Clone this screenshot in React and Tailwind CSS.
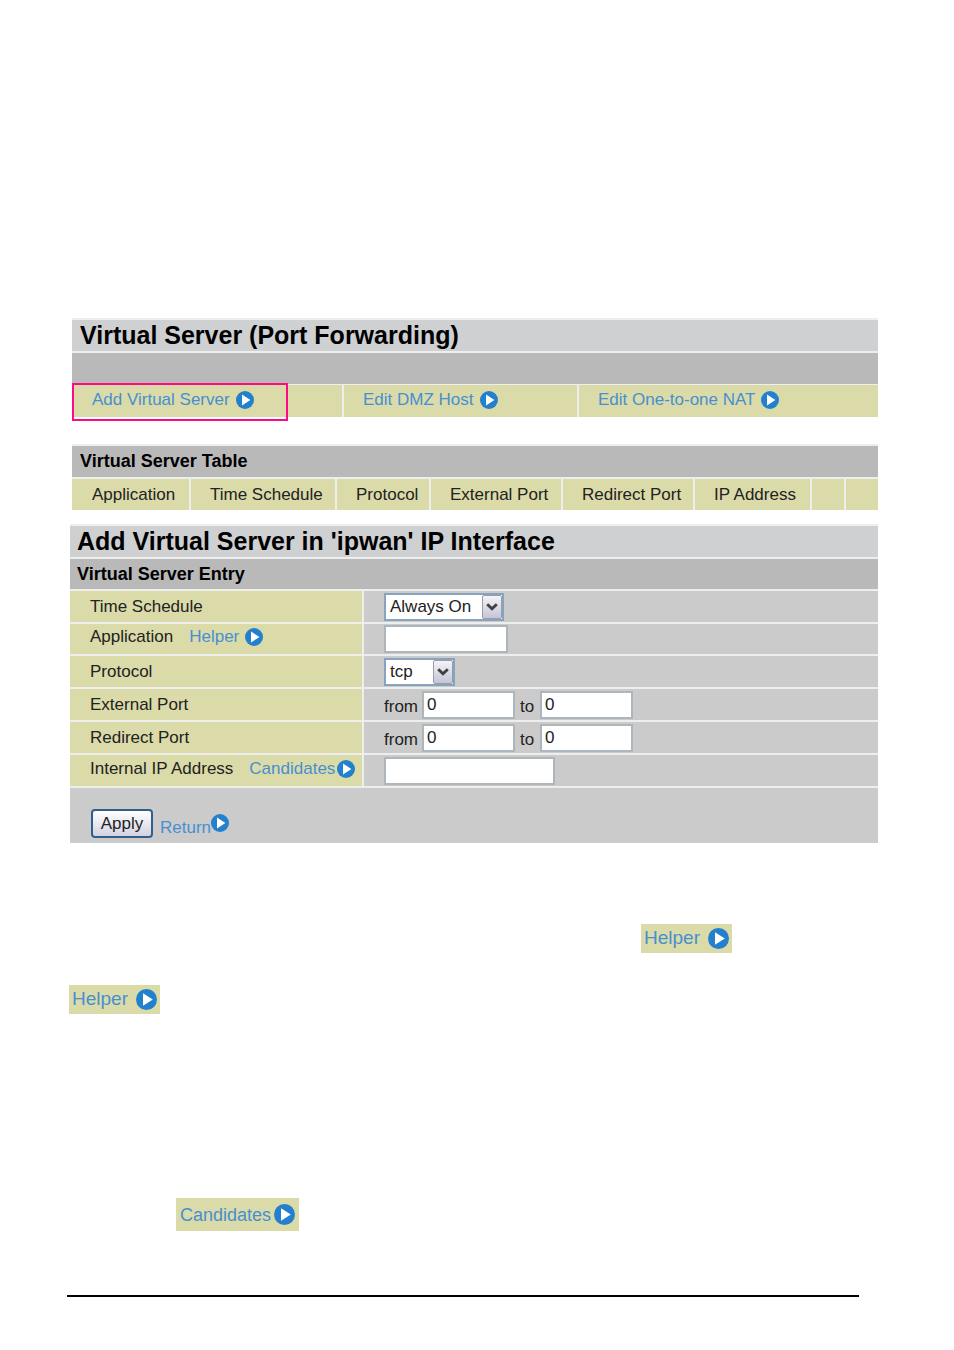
const columns = [
  { label: 'Application', width: 'w-[118px]' },
  { label: 'Time Schedule', width: 'w-[146px]' },
  { label: 'Protocol', width: 'w-[94px]' },
  { label: 'External Port', width: 'w-[132px]' },
  { label: 'Redirect Port', width: 'w-[132px]' },
  { label: 'IP Address', width: 'w-[117px]' },
  { label: '', width: 'w-[34px]' },
  { label: '', width: '' },
]

function ArrowIcon({ className = 'size-[18px]' }) {
  return (
    <svg className={`shrink-0 ${className}`} viewBox="0 0 18 18" aria-hidden="true">
      <circle cx="9" cy="9" r="9" fill="#2380cc" />
      <path d="M6 3.6v10.8L14.4 9z" fill="#fff" />
    </svg>
  )
}

function ArrowLink({ children, className = 'gap-[6px]' }) {
  return (
    <a href="#" className={`inline-flex items-center whitespace-nowrap text-[#4790d0] ${className}`}>
      {children}
      <ArrowIcon />
    </a>
  )
}

function HelpTag({ children, className }) {
  return (
    <a href="#" className={`flex w-fit items-center bg-[#dbdaa9] leading-[24px] text-[#4790d0] ${className}`}>
      {children}
      <ArrowIcon className="size-[21px]" />
    </a>
  )
}

function SelectBox({ id, options, width }) {
  return (
    <span className="relative inline-flex">
      <select
        id={id}
        className={`h-[28px] appearance-none rounded-none border-2 border-[#86a3c0] bg-white pl-1 text-[17px] leading-[22px] text-[#222] ${width}`}
      >
        {options.map((option) => (
          <option key={option}>{option}</option>
        ))}
      </select>
      <span className="pointer-events-none absolute top-[2px] right-[2px] flex h-[24px] w-[20px] items-center justify-center rounded-[2px] border border-[#9a9cab] bg-linear-to-b from-[#f4f4f8] to-[#c5c5d6]">
        <svg className="h-[8px] w-[12px]" viewBox="0 0 12 8" aria-hidden="true">
          <path d="M1.2 1.2L6 5.8l4.8-4.6" fill="none" stroke="#404040" strokeWidth="2.8" />
        </svg>
      </span>
    </span>
  )
}

function TextBox({ width, ...props }) {
  return (
    <input
      type="text"
      className={`h-[28px] rounded-none border-2 border-[#adb5bd] bg-white px-[3px] text-[17px] text-[#222] ${width}`}
      {...props}
    />
  )
}

function FormRow({ id, label, link, height = 'h-[33px]', children }) {
  return (
    <div className={`grid grid-cols-[294px_1fr] border-b-2 border-[#eeeeec] ${height}`}>
      <div className={`flex items-center gap-4 border-r-2 border-[#eeeeec] bg-[#dbdaa9] pl-[20px] whitespace-nowrap ${link ? 'pb-[4px]' : ''}`}>
        <label htmlFor={id}>{label}</label>
        {link}
      </div>
      <div className="flex items-center pl-[20px]">{children}</div>
    </div>
  )
}

function PortRange({ id, name }) {
  return (
    <>
      <label htmlFor={id} className="w-[38px] pt-[4px]">from</label>
      <TextBox id={id} width="w-[93px]" defaultValue="0" />
      <label htmlFor={`${id}-to`} className="w-[25px] pt-[4px] pl-[5px]">to</label>
      <TextBox id={`${id}-to`} width="w-[93px]" defaultValue="0" aria-label={`${name} to`} />
    </>
  )
}

export default function App() {
  return (
    <div className="bg-white pt-[318px] pb-[53px] font-['Liberation_Sans',Arial,sans-serif] text-[17px] leading-[20px] text-[#222]">
      <main>
        <section className="mr-[76px] ml-[72px]">
          <h1 className="h-[35px] border-y-2 border-[#eeeeec] bg-[#cfd0d2] pl-[8px] text-[25px] leading-[31px] font-bold text-black">
            Virtual Server (Port Forwarding)
          </h1>
          <div className="h-[32px] border-b border-[#eeeeec] bg-[#b9b9b9]" />
          <nav className="relative grid h-[32px] grid-cols-[272fr_235fr_299fr]">
            <div className="flex border-r-2 border-[#eeeeec] bg-[#dbdaa9] pb-[2px] pl-[20px]">
              <ArrowLink>Add Virtual Server</ArrowLink>
            </div>
            <div className="flex border-r-2 border-[#eeeeec] bg-[#dbdaa9] pb-[2px] pl-[19px]">
              <ArrowLink>Edit DMZ Host</ArrowLink>
            </div>
            <div className="flex bg-[#dbdaa9] pb-[2px] pl-[19px]">
              <ArrowLink>Edit One-to-one NAT</ArrowLink>
            </div>
            <span className="pointer-events-none absolute top-[-2px] left-0 h-[38px] w-[216px] border-2 border-[#ff0a86]" />
          </nav>
        </section>

        <section className="mt-[27px] mr-[76px] ml-[72px]">
          <h2 className="h-[35px] border-y-2 border-[#eeeeec] bg-[#b9b9b9] pl-[8px] text-[18px] leading-[31px] font-bold text-black">
            Virtual Server Table
          </h2>
          <table className="w-full table-fixed border-collapse">
            <thead>
              <tr className="h-[31px]">
                {columns.map((column, i) => (
                  <th
                    key={i}
                    scope="col"
                    className={`border-r-2 border-[#eeeeec] bg-[#dbdaa9] p-0 pl-[19px] text-left font-normal whitespace-nowrap first:pl-[20px] last:border-r-0 ${column.width}`}
                  >
                    {column.label}
                  </th>
                ))}
              </tr>
            </thead>
          </table>
        </section>

        <form className="mt-[14px] mr-[76px] ml-[70px] bg-[#cbcbcb]" onSubmit={(e) => e.preventDefault()}>
          <h1 className="h-[35px] border-y-2 border-[#eeeeec] bg-[#cfd0d2] pl-[7px] text-[25px] leading-[31px] font-bold text-black">
            Add Virtual Server in &apos;ipwan&apos; IP Interface
          </h1>
          <h2 className="h-[32px] border-b-2 border-[#eeeeec] bg-[#b9b9b9] pl-[7px] text-[18px] leading-[31px] font-bold text-black">
            Virtual Server Entry
          </h2>
          <FormRow id="schedule" label="Time Schedule">
            <SelectBox id="schedule" options={['Always On']} width="w-[120px]" />
          </FormRow>
          <FormRow id="application" label="Application" height="h-[32px]" link={<ArrowLink>Helper</ArrowLink>}>
            <TextBox id="application" width="w-[124px]" />
          </FormRow>
          <FormRow id="protocol" label="Protocol">
            <SelectBox id="protocol" options={['tcp', 'udp']} width="w-[71px]" />
          </FormRow>
          <FormRow id="external" label="External Port">
            <PortRange id="external" name="External port" />
          </FormRow>
          <FormRow id="redirect" label="Redirect Port">
            <PortRange id="redirect" name="Redirect port" />
          </FormRow>
          <FormRow id="internal" label="Internal IP Address" link={<ArrowLink className="gap-[2px]">Candidates</ArrowLink>}>
            <TextBox id="internal" width="w-[171px]" />
          </FormRow>
          <div className="flex h-[55px] items-end pb-[5px] pl-[21px]">
            <button
              type="submit"
              className="h-[29px] w-[62px] rounded-[4px] border-2 border-[#315f8c] bg-linear-to-b from-white to-[#d2d2e2]"
            >
              Apply
            </button>
            <a href="#" className="ml-[7px] flex items-start text-[#4790d0]">
              <span className="pt-[4px]">Return</span>
              <ArrowIcon />
            </a>
          </div>
        </form>

        <div className="mt-[81px] mr-[222px] flex justify-end">
          <HelpTag className="h-[29px] gap-[8px] px-[3px] pb-[1px] text-[19px]">Helper</HelpTag>
        </div>
        <div className="mt-[32px] ml-[69px]">
          <HelpTag className="h-[29px] gap-[8px] px-[3px] pb-[1px] text-[19px]">Helper</HelpTag>
        </div>
        <div className="mt-[184px] ml-[176px]">
          <HelpTag className="h-[33px] gap-[3px] px-[4px] text-[18px]">Candidates</HelpTag>
        </div>
      </main>
      <hr className="mt-[64px] mr-[95px] ml-[67px] border-t-2 border-black" />
    </div>
  )
}
